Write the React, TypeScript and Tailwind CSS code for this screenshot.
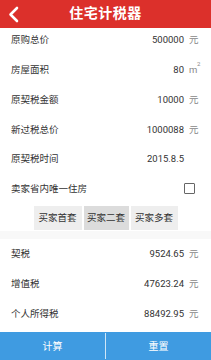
import React from 'react';

const inputRows = [
  { label: '原购总价', value: '500000', unit: '元' },
  { label: '房屋面积', value: '80', unit: 'm2' },
  { label: '原契税金额', value: '10000', unit: '元' },
  { label: '新过税总价', value: '1000088', unit: '元' },
  { label: '原契税时间', value: '2015.8.5', unit: '' },
];

const resultRows = [
  { label: '契税', value: '9524.65' },
  { label: '增值税', value: '47623.24' },
  { label: '个人所得税', value: '88492.95' },
];

function Unit({ unit }: { unit: string }) {
  if (unit === 'm2') {
    return (
      <span className="w-[12px] text-[#888] relative">
        m<span className="absolute left-[8px] top-[-4px] text-[6px] leading-[6px]">2</span>
      </span>
    );
  }
  return <span className="w-[12px] text-[#888]">{unit}</span>;
}

function Row({ label, value, unit }: { label: string; value: string; unit: string }) {
  return (
    <div className="h-[30px] flex items-start pt-[7px] pl-[11px] pr-[10px] leading-[10px]">
      <span className="flex-1 text-[#333]">{label}</span>
      <span className="text-[#333] mr-[5px]">{value}</span>
      <Unit unit={unit} />
    </div>
  );
}

export default function App() {
  return (
    <div
      className="w-[211px] h-[360px] flex flex-col bg-white text-[9.5px] overflow-hidden"
      style={{ fontFamily: "Roboto, 'Noto Sans CJK SC', sans-serif" }}
    >
      {/* Header */}
      <div className="h-[28px] bg-[#dc302b] relative flex items-center justify-center">
        <svg className="absolute left-[7px] top-[6px]" width="13" height="17" viewBox="0 0 13 17">
          <path d="M10 2 L3.5 8.5 L10 15" fill="none" stroke="white" strokeWidth="2.6" strokeLinecap="round" strokeLinejoin="round" />
        </svg>
        <span className="text-white text-[14px] font-bold tracking-[0.5px]">住宅计税器</span>
      </div>

      {/* Inputs */}
      {inputRows.map((r) => (
        <Row key={r.label} {...r} />
      ))}
      <div className="h-[30px] flex items-start pt-[7px] pl-[11px] pr-[16px] leading-[10px]">
        <span className="flex-1 text-[#333]">卖家省内唯一住房</span>
        <span className="mt-[-1px] w-[11px] h-[11px] border-[1.5px] border-[#666] rounded-[1px]" />
      </div>

      {/* Buyer type */}
      <div className="h-[24px] flex items-stretch justify-center gap-[2px] mt-[-1px]">
        <div className="w-[48px] bg-[#eeeeee] flex items-center justify-center text-[#333]">买家首套</div>
        <div className="w-[45px] bg-[#dcdcdc] flex items-center justify-center text-[#333]">买家二套</div>
        <div className="w-[47px] bg-[#eeeeee] flex items-center justify-center text-[#333]">买家多套</div>
      </div>
      <div className="h-[8px] bg-[#f8f8f8] mt-[1px]" />

      {/* Results */}
      <div className="flex-1 pt-[3px]">
        {resultRows.map((r) => (
          <Row key={r.label} label={r.label} value={r.value} unit="元" />
        ))}
      </div>

      {/* Bottom bar */}
      <div className="h-[28px] bg-[#3f9be1] flex text-white text-[10px]">
        <div className="flex-1 flex items-center justify-center">计算</div>
        <div className="w-px bg-[#cfe6f7] my-[1px]" />
        <div className="flex-1 flex items-center justify-center">重置</div>
      </div>
    </div>
  );
}
